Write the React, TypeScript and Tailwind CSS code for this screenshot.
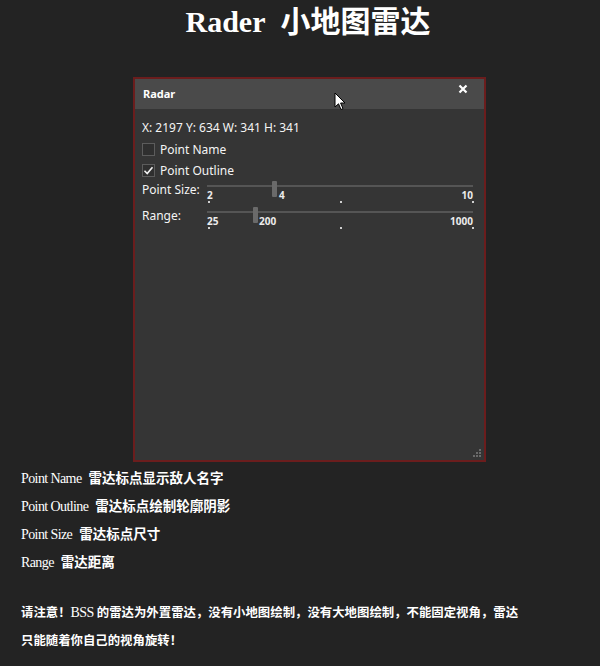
import React from "react";

const serif = { fontFamily: '"Liberation Serif", "Noto Sans CJK SC", serif' };
const ui = { fontFamily: '"Noto Sans", "Open Sans", sans-serif' };

function Slider({ thumb, labels, ticks }: { thumb: number; labels: { x: number; t: string; right?: boolean }[]; ticks: number[] }) {
  return (
    <div className="relative h-[26px] flex-1">
      <div className="absolute left-[2px] right-[2px] top-[4px] h-[2px] bg-[#555555]" />
      <div className="absolute top-0 h-[16px] w-[5px] rounded-[1px] bg-[#6a6a6a]" style={{ left: thumb }} />
      {labels.map((l, i) => (
        <span
          key={i}
          className="absolute top-[7px] text-[10px] font-bold leading-[14px] text-[#ececec]"
          style={l.right ? { right: l.x } : { left: l.x }}
        >
          {l.t}
        </span>
      ))}
      {ticks.map((x, i) => (
        <div key={i} className="absolute top-[20px] h-[2px] w-[2px] bg-[#cfcfcf]" style={{ left: x }} />
      ))}
    </div>
  );
}

function Check({ checked, label }: { checked?: boolean; label: string }) {
  return (
    <div className="flex h-[21px] items-center gap-[5px]">
      <div className="relative h-[13px] w-[13px] border border-[#5c5c5c] bg-[#2f2f2f]">
        {checked && (
          <svg viewBox="0 0 13 13" className="absolute left-[-1px] top-[-1px] h-[13px] w-[13px]">
            <path d="M2.5 6.8 L5.2 9.5 L10.5 3.2" stroke="#f2f2f2" strokeWidth="1.6" fill="none" />
          </svg>
        )}
      </div>
      <span className="text-[12px] text-[#f4f4f4]">{label}</span>
    </div>
  );
}

export default function App() {
  return (
    <div className="min-h-[666px] w-[600px] bg-[#232323] text-white">
      <h1 className="pl-[16px] text-center text-[30px] font-bold leading-[44px] text-white" style={serif}>
        Rader&nbsp; 小地图雷达
      </h1>

      <div className="ml-[133px] mt-[33px] flex h-[385px] w-[353px] flex-col border-2 border-[#6b1d1d] bg-[#353535]" style={ui}>
        <div className="relative flex h-[30px] items-center justify-between bg-[#4a4a4a] pl-[8px] pr-[16px]">
          <span className="text-[11px] font-bold text-white">Radar</span>
          <svg viewBox="0 0 10 10" className="mb-[10px] h-[10px] w-[10px]">
            <path d="M1.5 1.5 L8.5 8.5 M8.5 1.5 L1.5 8.5" stroke="#ffffff" strokeWidth="2.2" />
          </svg>
          <svg viewBox="0 0 12 19" className="absolute left-[199px] top-[13px] h-[19px] w-[12px]">
            <path d="M1 1 L1 15 L4.5 11.8 L7 17.5 L9 16.6 L6.6 11 L11 11 Z" fill="#ffffff" stroke="#000000" strokeWidth="1" />
          </svg>
        </div>
        <div className="relative flex-1 pl-[7px] pr-[9px] pt-[10px]">
          <div className="text-[12px] leading-[18px] text-[#f4f4f4]">X: 2197 Y: 634 W: 341 H: 341</div>
          <div className="mt-[2px]">
            <Check label="Point Name" />
            <Check checked label="Point Outline" />
          </div>
          <div className="flex">
            <span className="w-[63px] pt-[1px] text-[12px] leading-[16px] text-[#f4f4f4]">Point Size:</span>
            <Slider
              thumb={67}
              labels={[
                { x: 2, t: "2" },
                { x: 74, t: "4" },
                { x: 2, t: "10", right: true },
              ]}
              ticks={[3, 135, 267]}
            />
          </div>
          <div className="flex">
            <span className="w-[63px] pt-[1px] text-[12px] leading-[16px] text-[#f4f4f4]">Range:</span>
            <Slider
              thumb={48}
              labels={[
                { x: 2, t: "25" },
                { x: 54, t: "200" },
                { x: 2, t: "1000", right: true },
              ]}
              ticks={[3, 135, 267]}
            />
          </div>
          <div className="absolute bottom-[3px] right-[3px] grid grid-cols-3 gap-[1px]">
            <span />
            <span />
            <span className="h-[2px] w-[2px] bg-[#6a6a6a]" />
            <span />
            <span className="h-[2px] w-[2px] bg-[#6a6a6a]" />
            <span className="h-[2px] w-[2px] bg-[#6a6a6a]" />
            <span className="h-[2px] w-[2px] bg-[#6a6a6a]" />
            <span className="h-[2px] w-[2px] bg-[#6a6a6a]" />
            <span className="h-[2px] w-[2px] bg-[#6a6a6a]" />
          </div>
        </div>
      </div>

      <div className="mt-[3px] pl-[21px] text-[14px] leading-[28px] text-white" style={serif}>
        <div>
          <span className="tracking-[-0.6px]">Point Name</span>&nbsp; <span className="text-[13.5px] font-bold">雷达标点显示敌人名字</span>
        </div>
        <div>
          <span className="tracking-[-0.6px]">Point Outline</span>&nbsp; <span className="text-[13.5px] font-bold">雷达标点绘制轮廓阴影</span>
        </div>
        <div>
          <span className="tracking-[-0.6px]">Point Size</span>&nbsp; <span className="text-[13.5px] font-bold">雷达标点尺寸</span>
        </div>
        <div>
          <span className="tracking-[-0.6px]">Range</span>&nbsp; <span className="text-[13.5px] font-bold">雷达距离</span>
        </div>
        <div className="mt-[22px] text-[12.4px] font-bold">
          请注意！<span className="font-normal text-[14px] tracking-[-0.6px]">BSS</span> 的雷达为外置雷达，没有小地图绘制，没有大地图绘制，不能固定视角，雷达
          <br />
          只能随着你自己的视角旋转！
        </div>
      </div>
    </div>
  );
}
